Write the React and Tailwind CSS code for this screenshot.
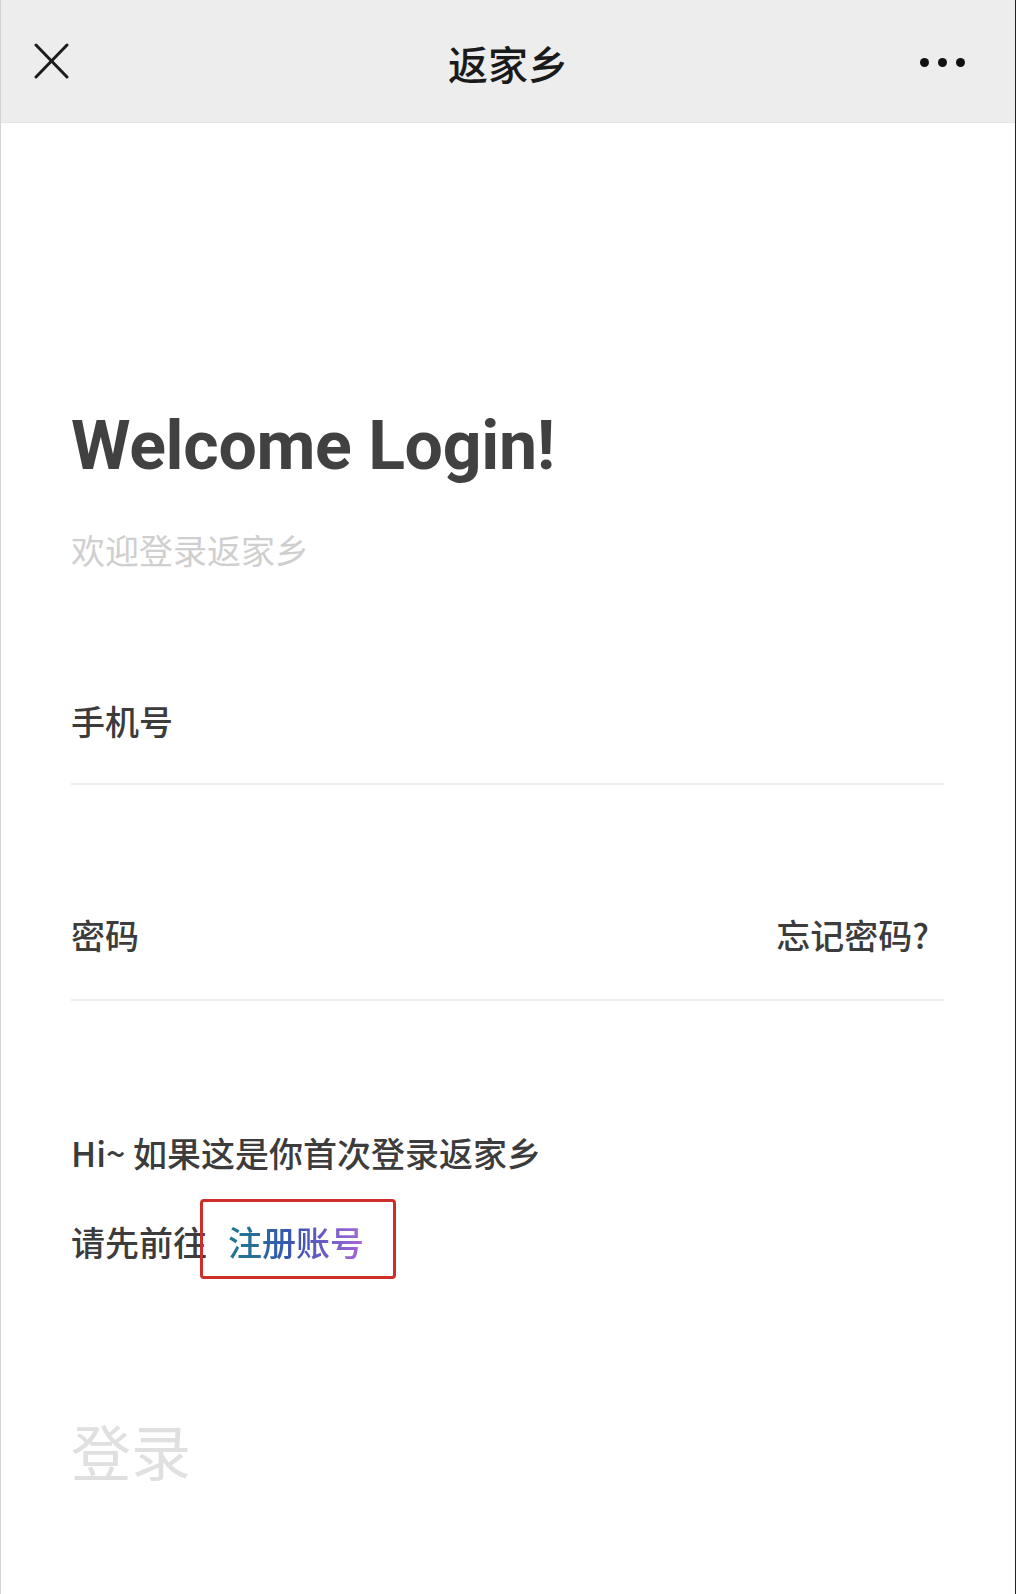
import React from "react";

const cjk = { fontFamily: '"Noto Sans CJK SC", "Noto Sans", sans-serif' };
const latin = { fontFamily: 'Roboto, "Noto Sans CJK SC", sans-serif' };

export default function App() {
  return (
    <div className="w-[1016px] min-h-[1594px] bg-white border-l border-l-[#d4d4d4] border-r border-r-[#222]" style={cjk}>
      {/* Header */}
      <div className="h-[123px] bg-[#ededed] grid grid-cols-3 items-center border-b border-b-[#e6e6e6]">
        <div className="pl-[33px] flex items-center">
          <svg width="36" height="36" viewBox="0 0 36 36" fill="none" stroke="#1c1c1c" strokeWidth="3" strokeLinecap="round">
            <line x1="2" y1="2" x2="33" y2="34" />
            <line x1="33" y1="2" x2="2" y2="34" />
          </svg>
        </div>
        <div className="text-center text-[40px] leading-none font-medium text-[#1a1a1a] pt-[3px]">返家乡</div>
        <div className="flex justify-end pr-[50px] gap-[9px] pt-[3px]">
          <span className="w-[9px] h-[9px] rounded-full bg-[#111]" />
          <span className="w-[9px] h-[9px] rounded-full bg-[#111]" />
          <span className="w-[9px] h-[9px] rounded-full bg-[#111]" />
        </div>
      </div>

      {/* Body */}
      <div className="pl-[70px] pr-[71px]">
        <div className="mt-[289px] text-[68px] leading-none font-bold text-[#414141] tracking-[-0.3px]" style={latin}>
          Welcome Login!
        </div>
        <div className="mt-[53px] text-[34px] leading-none text-[#cfcfcf]">欢迎登录返家乡</div>

        <div className="mt-[137px] pb-[45px] border-b-2 border-b-[#eeeeee]">
          <div className="text-[34px] leading-none font-medium text-[#3c3c3c]">手机号</div>
        </div>

        <div className="mt-[133px] pb-[47px] border-b-2 border-b-[#eeeeee] flex justify-between pr-[15px]">
          <div className="text-[34px] leading-none font-medium text-[#3c3c3c]">密码</div>
          <div className="text-[34px] leading-none font-medium text-[#3c3c3c]">忘记密码?</div>
        </div>

        <div className="mt-[135px] text-[34px] leading-none font-medium text-[#3c3c3c]">Hi~ 如果这是你首次登录返家乡</div>

        <div className="mt-[29px] flex items-start">
          <div className="mt-[26px] text-[34px] leading-none font-medium text-[#3c3c3c] w-[129px] whitespace-nowrap">请先前往</div>
          <div className="relative h-[80px] border-[3px] border-[#cc2f2a] rounded-[4px] pl-[25px] pr-[29px] pt-[23px]">
            <span className="text-[34px] leading-none font-medium bg-gradient-to-r from-[#197a8a] via-[#3a52b4] to-[#a866d8] bg-clip-text text-transparent">注册账号</span>
          </div>
        </div>

        <div className="mt-[141px] text-[60px] leading-none text-[#e0e0e0]">登录</div>
      </div>
    </div>
  );
}
